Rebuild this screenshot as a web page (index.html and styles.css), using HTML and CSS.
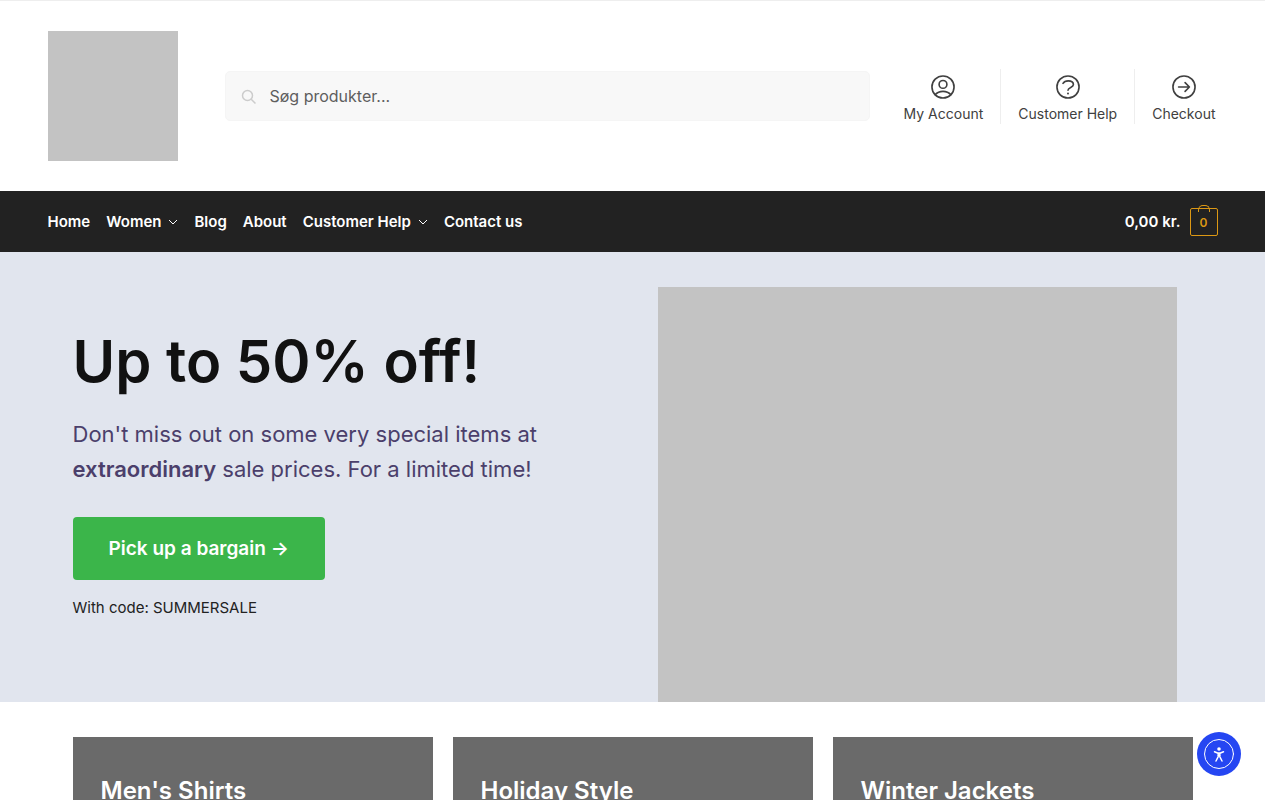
FILE: index.html
```html
<!DOCTYPE html>
<html lang="da">
<head>
    <meta charset="UTF-8">
    <meta name="viewport" content="width=device-width, initial-scale=1.0">
    <title>Shop</title>
    <link rel="stylesheet" href="styles.css">
</head>
<body>
    <header class="site-header">
        <div class="container header-row">
            <a class="logo" href="#" aria-label="Home"></a>
            <form class="search" role="search">
                <svg class="search-icon" viewBox="0 0 16 16" aria-hidden="true">
                    <circle cx="6.5" cy="6.5" r="5"/>
                    <path d="M10.2 10.2L14.5 14.5"/>
                </svg>
                <input type="search" placeholder="Søg produkter..." aria-label="Søg produkter">
            </form>
            <nav class="secondary-nav">
                <a href="#">
                    <svg viewBox="0 0 24 24" aria-hidden="true">
                        <circle cx="12" cy="12" r="10.2"/>
                        <circle cx="12" cy="9.6" r="3.6"/>
                        <path d="M4.8 19C6.600 17 9 16 12 16s5.400 1 7.200 3"/>
                    </svg>
                    My Account
                </a>
                <a href="#">
                    <svg viewBox="0 0 24 24" aria-hidden="true">
                        <circle cx="12" cy="12" r="10.2"/>
                        <path d="M7.400 8.600C8.400 6.900 10.200 6.300 12.200 6.300C15 6.300 17 7.700 17 9.800C17 12.600 12 12.200 12 15"/>
                        <circle class="dot" cx="12" cy="18" r="0.9"/>
                    </svg>
                    Customer Help
                </a>
                <a href="#">
                    <svg viewBox="0 0 24 24" aria-hidden="true">
                        <circle cx="12" cy="12" r="10.2"/>
                        <path d="M7 12H17M13 8l4 4-4 4"/>
                    </svg>
                    Checkout
                </a>
            </nav>
        </div>
    </header>

    <div class="main-nav">
        <div class="container nav-row">
            <nav class="menu">
                <a href="#">Home</a>
                <a href="#">Women
                    <svg class="chevron" viewBox="0 0 10 6" aria-hidden="true"><path d="M1 1l4 4 4-4"/></svg>
                </a>
                <a href="#">Blog</a>
                <a href="#">About</a>
                <a href="#">Customer Help
                    <svg class="chevron" viewBox="0 0 10 6" aria-hidden="true"><path d="M1 1l4 4 4-4"/></svg>
                </a>
                <a href="#">Contact us</a>
            </nav>
            <a class="cart" href="#">
                0,00 kr.
                <span class="cart-count">0</span>
            </a>
        </div>
    </div>

    <main>
        <section class="hero">
            <div class="inner hero-grid">
                <div class="hero-text">
                    <h1>Up to 50% off!</h1>
                    <p class="lead">Don't miss out on some very special items at <strong>extraordinary</strong> sale prices. For a limited time!</p>
                    <a class="button" href="#">Pick up a bargain →</a>
                    <p class="code">With code: SUMMERSALE</p>
                </div>
                <div class="hero-image"></div>
            </div>
        </section>

        <section class="inner categories">
            <a class="category" href="#"><h2>Men's Shirts</h2></a>
            <a class="category" href="#"><h2>Holiday Style</h2></a>
            <a class="category" href="#"><h2>Winter Jackets</h2></a>
        </section>
    </main>

    <button class="accessibility" type="button" aria-label="Accessibility">
        <svg viewBox="0 0 44 44" aria-hidden="true">
            <circle class="ring" cx="22" cy="22" r="14.500"/>
            <circle class="head" cx="22" cy="17" r="1.800"/>
            <path d="M17.500 19.800L20.500 21h3l3-1.200M21.200 21v3.600L19 29M22.800 21v3.600L25 29M21 23.500h2"/>
        </svg>
    </button>
</body>
</html>
```
FILE: styles.css
```css
* {
    box-sizing: border-box;
}

body {
    margin: 0;
    padding-right: 15px;
    font-family: Inter, "Liberation Sans", sans-serif;
    font-size: 15px;
    color: #222;
    background-color: #fff;
}

a {
    color: inherit;
    text-decoration: none;
}

h1, h2, p {
    margin: 0;
}

.container {
    max-width: 1170px;
    margin: 0 auto;
}

.inner {
    max-width: 1120px;
    margin: 0 auto;
}

/* Header */
.site-header {
    border-top: 1px solid #eee;
    padding: 30px 0;
}

.header-row {
    display: flex;
    align-items: center;
}

.logo {
    width: 130px;
    height: 130px;
    margin-right: 47px;
    background-color: #c3c3c3;
}

.search {
    position: relative;
    flex: 1;
}

.search input {
    display: block;
    width: 100%;
    height: 50px;
    padding: 0 20px 0 44px;
    border: 1px solid #f5f5f5;
    border-radius: 5px;
    background-color: #f8f8f8;
    font-family: inherit;
    font-size: 16px;
    color: #222;
}

.search input::placeholder {
    color: #5e5e5e;
}

.search-icon {
    position: absolute;
    left: 16px;
    top: 18px;
    width: 16px;
    height: 16px;
    fill: none;
    stroke: #ccc;
    stroke-width: 1.5;
}

.secondary-nav {
    display: flex;
    margin-left: 17px;
}

.secondary-nav a {
    display: flex;
    flex-direction: column;
    align-items: center;
    gap: 4px;
    padding: 5px 17px 0;
    height: 55px;
    font-size: 14px;
    line-height: 20px;
    color: #404040;
    border-right: 1px solid #eee;
}

.secondary-nav a:last-child {
    padding-right: 2px;
    border-right: none;
}

.secondary-nav svg {
    width: 26px;
    height: 26px;
    fill: none;
    stroke: #404040;
    stroke-width: 1.5;
    stroke-linecap: round;
    stroke-linejoin: round;
}

.secondary-nav .dot {
    fill: #404040;
    stroke: none;
}

/* Navigation bar */
.main-nav {
    background-color: #222;
    color: #fff;
    font-weight: 600;
}

.nav-row {
    display: flex;
    justify-content: space-between;
    align-items: center;
    height: 61px;
}

.menu {
    display: flex;
    gap: 16px;
}

.menu a {
    display: flex;
    align-items: center;
    gap: 7px;
}

.chevron {
    width: 10px;
    height: 6px;
    fill: none;
    stroke: #fff;
}

.cart {
    display: flex;
    align-items: center;
    gap: 9px;
}

.cart-count {
    position: relative;
    width: 28px;
    height: 28px;
    border: 1px solid #dc9814;
    border-radius: 2px;
    color: #dc9814;
    font-size: 12px;
    line-height: 28px;
    text-align: center;
}

.cart-count::before {
    content: "";
    position: absolute;
    left: 7px;
    top: -4px;
    width: 10px;
    height: 6px;
    border: 1px solid #dc9814;
    border-bottom: none;
    border-radius: 5px 5px 0 0;
}

/* Hero */
.hero {
    padding-top: 35px;
    background-color: #e1e5ee;
}

.hero-grid {
    display: grid;
    grid-template-columns: 1fr 1fr;
    gap: 50px;
}

.hero-text {
    padding-top: 38px;
}

.hero h1 {
    font-size: 58px;
    font-weight: 600;
    line-height: 72px;
    font-variant-ligatures: none;
    color: #111;
}

.lead {
    margin-top: 20px;
    font-size: 22px;
    line-height: 35px;
    color: #4b3f6b;
}

.lead strong {
    font-weight: 600;
}

.button {
    display: inline-block;
    margin-top: 30px;
    padding: 16px 36px;
    border-radius: 4px;
    background-color: #3bb54a;
    color: #fff;
    font-size: 19px;
    font-weight: 600;
    line-height: 31px;
}

.code {
    margin-top: 16px;
    line-height: 24px;
}

.hero-image {
    height: 415px;
    margin-right: 16px;
    background-color: #c3c3c3;
}

/* Categories */
.categories {
    display: grid;
    grid-template-columns: repeat(3, 1fr);
    gap: 20px;
    padding-top: 35px;
}

.category {
    height: 220px;
    padding: 36px 28px;
    background-color: #6a6a6a;
    color: #fff;
}

.category h2 {
    font-size: 24px;
    font-weight: 600;
    line-height: 36px;
}

/* Floating accessibility button */
.accessibility {
    position: fixed;
    right: 39px;
    bottom: 24px;
    width: 44px;
    height: 44px;
    padding: 0;
    border: none;
    border-radius: 50%;
    background-color: #2546f2;
    cursor: pointer;
}

.accessibility svg {
    display: block;
    fill: none;
    stroke: #fff;
    stroke-width: 1.5;
    stroke-linecap: round;
    stroke-linejoin: round;
}

.accessibility .ring {
    stroke-width: 1;
}

.accessibility .head {
    fill: #fff;
    stroke: none;
}

@media (max-width: 768px) {
    .hero-grid, .categories {
        grid-template-columns: 1fr;
    }
}
```
